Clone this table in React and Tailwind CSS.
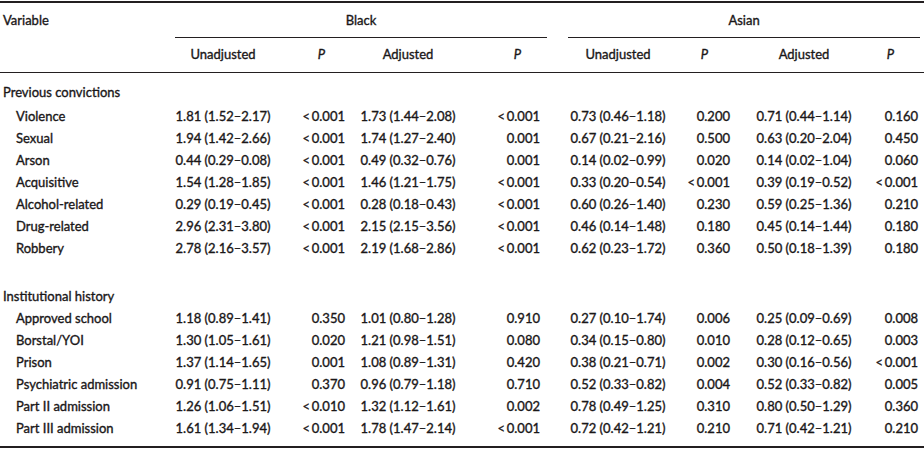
import React from "react";

const pc = [
  ["Violence", "1.81 (1.52–2.17)", "<0.001", "1.73 (1.44–2.08)", "<0.001", "0.73 (0.46–1.18)", "0.200", "0.71 (0.44–1.14)", "0.160"],
  ["Sexual", "1.94 (1.42–2.66)", "<0.001", "1.74 (1.27–2.40)", "0.001", "0.67 (0.21–2.16)", "0.500", "0.63 (0.20–2.04)", "0.450"],
  ["Arson", "0.44 (0.29–0.08)", "<0.001", "0.49 (0.32–0.76)", "0.001", "0.14 (0.02–0.99)", "0.020", "0.14 (0.02–1.04)", "0.060"],
  ["Acquisitive", "1.54 (1.28–1.85)", "<0.001", "1.46 (1.21–1.75)", "<0.001", "0.33 (0.20–0.54)", "<0.001", "0.39 (0.19–0.52)", "<0.001"],
  ["Alcohol-related", "0.29 (0.19–0.45)", "<0.001", "0.28 (0.18–0.43)", "<0.001", "0.60 (0.26–1.40)", "0.230", "0.59 (0.25–1.36)", "0.210"],
  ["Drug-related", "2.96 (2.31–3.80)", "<0.001", "2.15 (2.15–3.56)", "<0.001", "0.46 (0.14–1.48)", "0.180", "0.45 (0.14–1.44)", "0.180"],
  ["Robbery", "2.78 (2.16–3.57)", "<0.001", "2.19 (1.68–2.86)", "<0.001", "0.62 (0.23–1.72)", "0.360", "0.50 (0.18–1.39)", "0.180"],
];

const ih = [
  ["Approved school", "1.18 (0.89–1.41)", "0.350", "1.01 (0.80–1.28)", "0.910", "0.27 (0.10–1.74)", "0.006", "0.25 (0.09–0.69)", "0.008"],
  ["Borstal/YOI", "1.30 (1.05–1.61)", "0.020", "1.21 (0.98–1.51)", "0.080", "0.34 (0.15–0.80)", "0.010", "0.28 (0.12–0.65)", "0.003"],
  ["Prison", "1.37 (1.14–1.65)", "0.001", "1.08 (0.89–1.31)", "0.420", "0.38 (0.21–0.71)", "0.002", "0.30 (0.16–0.56)", "<0.001"],
  ["Psychiatric admission", "0.91 (0.75–1.11)", "0.370", "0.96 (0.79–1.18)", "0.710", "0.52 (0.33–0.82)", "0.004", "0.52 (0.33–0.82)", "0.005"],
  ["Part II admission", "1.26 (1.06–1.51)", "<0.010", "1.32 (1.12–1.61)", "0.002", "0.78 (0.49–1.25)", "0.310", "0.80 (0.50–1.29)", "0.360"],
  ["Part III admission", "1.61 (1.34–1.94)", "<0.001", "1.78 (1.47–2.14)", "<0.001", "0.72 (0.42–1.21)", "0.210", "0.71 (0.42–1.21)", "0.210"],
];

function fmt(v) {
  if (v.startsWith("<")) return "<\u2009" + v.slice(1);
  return v;
}

function Row({ r }) {
  return (
    <tr className="h-[22px]">
      <td className="pl-[16px] text-left whitespace-nowrap">{r[0]}</td>
      <td className="text-center pr-[26px] whitespace-nowrap">{r[1]}</td>
      <td className="text-right pr-[3px] whitespace-nowrap">{fmt(r[2])}</td>
      <td className="text-center pr-[2px] whitespace-nowrap">{r[3]}</td>
      <td className="text-right pr-[10px] whitespace-nowrap">{fmt(r[4])}</td>
      <td className="text-center pl-[2px] whitespace-nowrap">{r[5]}</td>
      <td className="text-right pr-[6px] whitespace-nowrap">{fmt(r[6])}</td>
      <td className="text-center whitespace-nowrap">{r[7]}</td>
      <td className="text-right pr-[6px] whitespace-nowrap">{fmt(r[8])}</td>
    </tr>
  );
}

export default function App() {
  return (
    <div className="w-[924px] h-[451px] overflow-hidden bg-white pt-[1px] text-[#1a1718] text-[13px] leading-none [-webkit-text-stroke:0.35px_#1a1718]" style={{ fontFamily: "Lato, 'Open Sans', sans-serif" }}>
      <div className="h-[2px] bg-[#231f20]"></div>
      <table className="table-fixed w-[924px] border-collapse">
        <colgroup>
          <col className="w-[172px]" />
          <col className="w-[128px]" />
          <col className="w-[48px]" />
          <col className="w-[122px]" />
          <col className="w-[80px]" />
          <col className="w-[134px]" />
          <col className="w-[52px]" />
          <col className="w-[136px]" />
          <col className="w-[52px]" />
        </colgroup>
        <thead>
          <tr className="h-[35px]">
            <th className="text-left font-normal pl-[3px] p-0">Variable</th>
            <th colSpan={4} className="font-normal p-0">
              <div className="mx-[3px] h-[35px] flex items-center justify-center border-b border-[#231f20]">Black</div>
            </th>
            <th colSpan={4} className="font-normal p-0">
              <div className="ml-[18px] mr-[4px] h-[35px] flex items-center justify-center border-b border-[#231f20]">Asian</div>
            </th>
          </tr>
          <tr className="h-[34px] border-b border-[#231f20]">
            <th></th>
            <th className="font-normal text-center pr-[26px]">Unadjusted</th>
            <th className="font-normal italic text-right pr-[23px]">P</th>
            <th className="font-normal text-center pr-[2px]">Adjusted</th>
            <th className="font-normal italic text-right pr-[29px]">P</th>
            <th className="font-normal text-center pl-[2px]">Unadjusted</th>
            <th className="font-normal italic text-right pr-[28px]">P</th>
            <th className="font-normal text-center">Adjusted</th>
            <th className="font-normal italic text-right pr-[30px]">P</th>
          </tr>
        </thead>
        <tbody>
          <tr className="h-[9px]"><td colSpan={9}></td></tr>
          <tr className="h-[22px]">
            <td colSpan={9} className="pl-[3px] text-left">Previous convictions</td>
          </tr>
          <tr className="h-[2px]"><td colSpan={9}></td></tr>
          {pc.map((r) => <Row key={r[0]} r={r} />)}
          <tr className="h-[26px]"><td colSpan={9}></td></tr>
          <tr className="h-[22px]">
            <td colSpan={9} className="pl-[3px] text-left">Institutional history</td>
          </tr>
          {ih.map((r) => <Row key={r[0]} r={r} />)}
        </tbody>
      </table>
      <div className="h-[7px]"></div>
      <div className="h-[2px] bg-[#231f20]"></div>
    </div>
  );
}
